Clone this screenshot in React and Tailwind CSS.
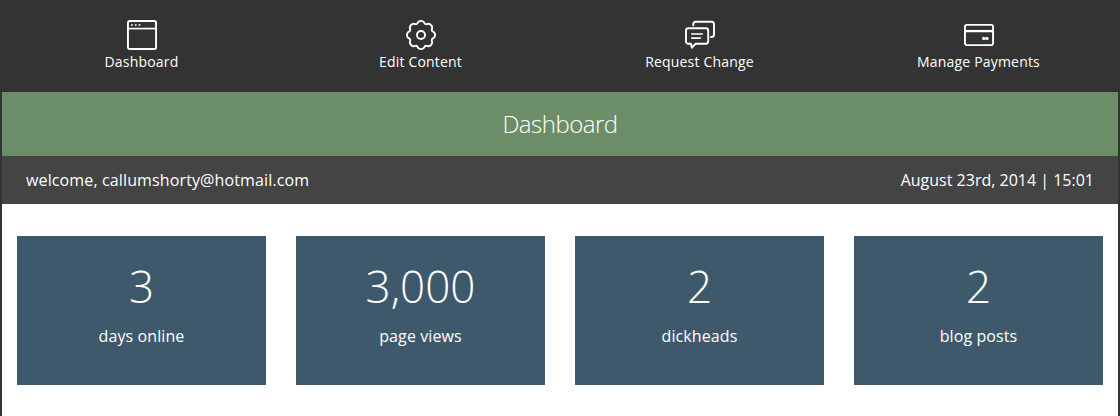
import React from "react";

function WindowIcon() {
  return (
    <svg className="block size-[30px]" viewBox="0 0 30 30" fill="none" stroke="#fff" strokeWidth="1.9">
      <rect x="0.95" y="0.95" width="28.1" height="28.1" rx="1.8" />
      <path d="M1 8.6h28" strokeWidth="1.7" />
      <path d="M4 5h1.8M7.8 5h1.8M11.6 5h1.8" strokeWidth="1.7" />
    </svg>
  );
}

function GearIcon() {
  return (
    <svg className="block size-[30px]" viewBox="0 0 30 30" fill="none" stroke="#fff" strokeWidth="1.9" strokeLinejoin="round">
      <path d="M11.33 3.36A3.97 3.97 0 0 1 18.67 3.36Q19.32 4.56 20.63 4.18A3.97 3.97 0 0 1 25.82 9.37Q25.44 10.68 26.64 11.33A3.97 3.97 0 0 1 26.64 18.67Q25.44 19.32 25.82 20.63A3.97 3.97 0 0 1 20.63 25.82Q19.32 25.44 18.67 26.64A3.97 3.97 0 0 1 11.33 26.64Q10.68 25.44 9.37 25.82A3.97 3.97 0 0 1 4.18 20.63Q4.56 19.32 3.36 18.67A3.97 3.97 0 0 1 3.36 11.33Q4.56 10.68 4.18 9.37A3.97 3.97 0 0 1 9.37 4.18Q10.68 4.56 11.33 3.36Z" />
      <circle cx="15" cy="15" r="4" />
    </svg>
  );
}

function ChatIcon() {
  return (
    <svg className="block size-[30px]" viewBox="0 0 30 30" fill="none" stroke="#fff" strokeWidth="1.9" strokeLinejoin="round" strokeLinecap="round">
      <path d="M8.3 5.4V4.2Q8.3 1.8 10.7 1.8H26.6Q29 1.8 29 4.2V14.6Q29 17 26.6 17H26" />
      <path d="M3.4 8.3H20.8Q23.2 8.3 23.2 10.7V21.3Q23.2 23.7 20.8 23.7H10.7L6.9 27.7L5.9 23.7H3.4Q1 23.7 1 21.3V10.7Q1 8.3 3.4 8.3Z" />
      <path d="M6.7 14h10.6M6.7 18.1h8.7" strokeWidth="1.6" />
    </svg>
  );
}

function CardIcon() {
  return (
    <svg className="block size-[30px]" viewBox="0 0 30 30" fill="none" stroke="#fff" strokeWidth="1.9">
      <rect x="0.95" y="4.9" width="28.1" height="20.2" rx="1.8" />
      <path d="M1 11.1h28" strokeWidth="2.3" />
      <circle cx="19.7" cy="18.4" r="1.7" fill="#fff" stroke="none" />
      <circle cx="22.9" cy="18.4" r="1.7" fill="#fff" stroke="none" />
    </svg>
  );
}

const navItems = [
  { label: "Dashboard", Icon: WindowIcon },
  { label: "Edit Content", Icon: GearIcon },
  { label: "Request Change", Icon: ChatIcon },
  { label: "Manage Payments", Icon: CardIcon },
];

const stats = [
  { value: "3", label: "days online" },
  { value: "3,000", label: "page views" },
  { value: "2", label: "dickheads" },
  { value: "2", label: "blog posts" },
];

export default function App() {
  return (
    <div className="flex h-[416px] flex-col bg-[#333333] px-0.5 font-['Open_Sans',sans-serif] text-white">
      <nav className="grid h-[92px] shrink-0 grid-cols-4 pt-5">
        {navItems.map(({ label, Icon }) => (
          <a key={label} href="#" className="flex flex-col items-center text-sm leading-6 tracking-[0.19px]">
            <Icon />
            <span>{label}</span>
          </a>
        ))}
      </nav>
      <h1 className="h-16 shrink-0 bg-[#6b8e68] text-center text-2xl leading-16 font-light tracking-[-0.5px]">Dashboard</h1>
      <div className="flex h-12 shrink-0 items-center justify-between bg-[#444444] px-6 text-base">
        <span className="tracking-[0.13px]">welcome, callumshorty@hotmail.com</span>
        <span>August 23rd, 2014 | 15:01</span>
      </div>
      <main className="grid flex-1 grid-cols-4 items-start gap-[30px] bg-white px-[15px] pt-8">
        {stats.map(({ value, label }) => (
          <section key={label} className="flex h-[149px] flex-col items-center bg-[#3f596c] pt-5">
            <strong className="text-[44px] leading-[60px] font-light">{value}</strong>
            <span className="mt-2 text-base tracking-[0.1px]">{label}</span>
          </section>
        ))}
      </main>
    </div>
  );
}
